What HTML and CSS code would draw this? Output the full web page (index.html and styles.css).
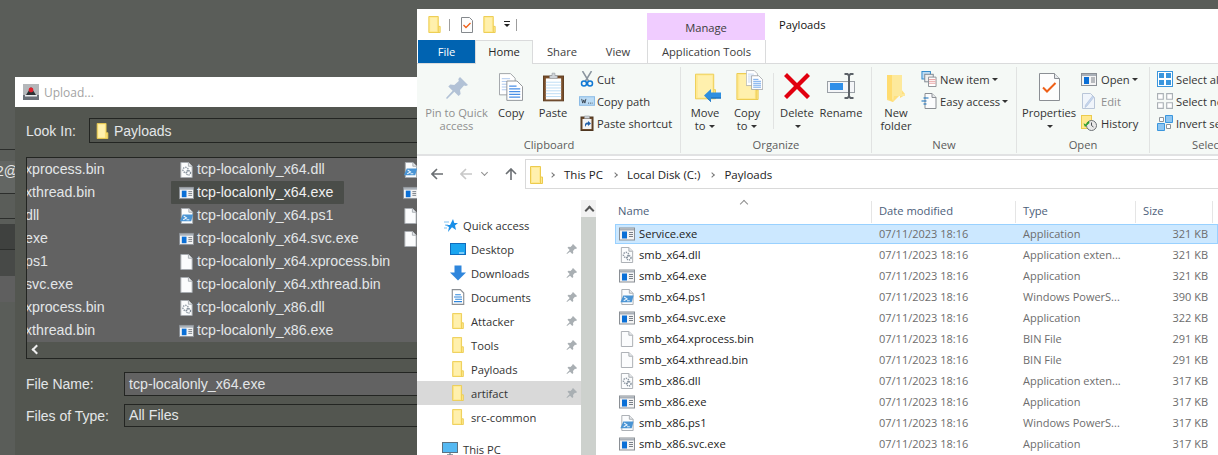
FILE: index.html
```html
<!DOCTYPE html>
<html lang="en">
<head>
<meta charset="utf-8">
<title>Payloads</title>
<link rel="stylesheet" href="styles.css">
</head>
<body>
<svg class="defs" width="0" height="0" aria-hidden="true">
  <defs>
    <symbol id="folder" viewBox="0 0 13 18"><path d="M.5.5h10v10.500h2v6.500H.5z" fill="#ffe98f" stroke="#eccb4e"/><path d="M10.500 11v6.500" stroke="#eccb4e"/><path d="M2 2h7v14H2z" fill="#fff0ad"/></symbol>
    <symbol id="exe" viewBox="0 0 16 13"><rect x=".5" y=".5" width="15" height="12" fill="#f4f4f4" stroke="#8a8f95"/><rect x="1" y="1" width="14" height="2" fill="#a9b0b8"/><rect x="3" y="4" width="5" height="7" fill="#0a6fd6"/><path d="M10 5h4M10 7h4M10 9h4" stroke="#7a8088"/></symbol>
    <symbol id="blank" viewBox="0 0 13 17"><path d="M.5.5h8l4 4v12H.5z" fill="#fbfcfd" stroke="#a6abb0"/><path d="M8.500.5v4h4" fill="#e6e9ec" stroke="#a6abb0"/></symbol>
    <symbol id="dll" viewBox="0 0 13 17"><path d="M.5.5h8l4 4v12H.5z" fill="#fbfcfd" stroke="#a6abb0"/><path d="M8.500.5v4h4" fill="#e6e9ec" stroke="#a6abb0"/><circle cx="5.500" cy="8.500" r="2.800" fill="none" stroke="#8e98a3" stroke-width="1.600" stroke-dasharray="1.500 1"/><circle cx="8.500" cy="11.500" r="2.300" fill="none" stroke="#7f8b97" stroke-width="1.400" stroke-dasharray="1.200 .8"/></symbol>
    <symbol id="ps1" viewBox="0 0 14 17"><path d="M1.500.5h8l4 4v12h-12z" fill="#fbfcfd" stroke="#a6abb0"/><path d="M9.500.5v4h4" fill="#e6e9ec" stroke="#a6abb0"/><path d="M3 7h11l-2 7H0z" fill="#4a94d4"/><path d="M4 8.500l3 2-3.500 2" fill="none" stroke="#e9f4fd" stroke-width="1.200"/><path d="M7 12.500h3" stroke="#e9f4fd"/></symbol>
    <symbol id="pin" viewBox="0 0 12 12"><path d="M7 1l4 4-1 1-1-.200-2 2.200.300 2-1 1-2.300-2.300L1 11l-.500-.500L3.700 7 1.500 4.700l1-1 2 .300L6.700 1.800 6.500 1z" fill="#a9afb3"/></symbol>
    <symbol id="bigpin" viewBox="0 0 24 24"><path d="M15 1l8 8-2 1-2-.500-4 4.500.600 4-2 2-4.300-4.300L2 23l-1-1 6.600-7.300L3.300 10.400l2-2 4 .600L13.800 5 13.300 3z" fill="#b2c2d6"/></symbol>
    <symbol id="copy" viewBox="0 0 26 30"><path d="M.5.500h12l5 5v18H.500z" fill="#fff" stroke="#9a9ea3"/><path d="M3 6h9M3 9h12M3 12h12M3 15h12M3 18h12" stroke="#a9c6ee"/><path d="M8.500 8.500h11l6 6v15h-17z" fill="#fff" stroke="#8b8f94"/><path d="M11 14h8M11 17h12M11 20h12M11 23h12M11 26h12" stroke="#4a8fe6" stroke-width="1.200"/></symbol>
    <symbol id="paste" viewBox="0 0 22 30"><rect x=".5" y="3.500" width="21" height="26" fill="#7a4f2a" stroke="#5f3d20"/><rect x="3" y="6" width="16" height="22" fill="#fff"/><path d="M3 10h16M3 13h16M3 16h16M3 19h16M3 22h16M3 25h16" stroke="#bcdcf5"/><path d="M7 3h2.500V.5h3V3H15v3H7z" fill="#cfd4d9" stroke="#8d9399" stroke-width=".6"/></symbol>
    <symbol id="cut" viewBox="0 0 13 16"><path d="M2 0l6 10M11 0L5 10" stroke="#8a949e" stroke-width="1.500" fill="none"/><circle cx="3.500" cy="12.500" r="2.500" fill="none" stroke="#0f78d4" stroke-width="1.500"/><circle cx="9.500" cy="12.500" r="2.500" fill="none" stroke="#0f78d4" stroke-width="1.500"/></symbol>
    <symbol id="copypath" viewBox="0 0 15 9"><rect x=".5" y=".5" width="14" height="8" fill="#bcdcf5" stroke="#8cbce6"/><path d="M2.500 2.500l1 4 1-3 1 3 1-4M8.500 6.500h1M10.500 6.500h1M12.500 6.500h.5" stroke="#2f3b47" fill="none" stroke-width=".8"/></symbol>
    <symbol id="pasteshort" viewBox="0 0 13 16"><rect x=".5" y="2" width="12" height="13.500" fill="#6d4a2a" stroke="#4f3720"/><rect x="2" y="4" width="9" height="10" fill="#f4f4f4"/><path d="M4 1h5v2.500H4z" fill="#cfd4d9" stroke="#8d9399" stroke-width=".6"/><path d="M4.500 12V9.500c0-1 1-2 2-2h1V6l3 2.500-3 2.500V9.500h-1c-.600 0-1 .500-1 1.100z" fill="#1f5ea8"/></symbol>
    <symbol id="bigfolder" viewBox="0 0 23 28"><path d="M.5.5h20v17h2v10H.500z" fill="#ffe98f" stroke="#eccb4e"/><path d="M20.500 17.500v10" stroke="#eccb4e"/><path d="M3 2h16v24H3z" fill="#fff0ad"/></symbol>
    <symbol id="arrowblue" viewBox="0 0 17 13"><path d="M7 0v3.500h10v6H7V13L0 6.500z" fill="#2f8fe0"/><path d="M7 9.500h10v-1H7zM7 13L.5 7 7 12z" fill="#1668b4"/></symbol>
    <symbol id="deletex" viewBox="0 0 26 26"><path d="M3 0l10 10L23 0l3 3-10 10 10 10-3 3-10-10L3 26l-3-3 10-10L0 3z" fill="#e1000f"/></symbol>
    <symbol id="rename" viewBox="0 0 28 26"><rect x=".5" y="8.500" width="27" height="11" fill="#f4f6f8" stroke="#9aa0a6"/><rect x="3" y="10" width="13" height="7" fill="#2f8fe8"/><path d="M19 1h3l1.500 1.500L25 1h3M23.500 2v21M19 25h3l1.500-1.500L25 25h3" transform="translate(-1.500)" fill="none" stroke="#5c6268" stroke-width="2"/></symbol>
    <symbol id="newfolder" viewBox="0 0 18 27"><path d="M0 0h13v23l5-3V20H14v-6 0l4 5v1h-5L6 27 0 25z" fill="#ffe07f"/><path d="M5 0h10v19h3v2H7l-1 6-1-3V0z" fill="#fde99c"/><path d="M0 0h5v24l1 3-6-4z" fill="#ffdc70"/></symbol>
    <symbol id="newitem" viewBox="0 0 16 17"><rect x=".5" y=".5" width="9" height="8" fill="#bcdcf5" stroke="#2d87c9"/><rect x="3.500" y="3.500" width="9" height="8" fill="#f0f0f0" stroke="#7d868f"/><path d="M7.500 6.500h8v10h-8z" fill="#fff" stroke="#8b8f94"/><path d="M8 9h7M8 11h7M8 13h7" stroke="#e7a0a0"/></symbol>
    <symbol id="easy" viewBox="0 0 15 16"><path d="M3.500.5h7l4 4v11h-11z" fill="#fbfcfd" stroke="#8b8f94"/><path d="M10.500.5v4h4" fill="#e6e9ec" stroke="#8b8f94"/><path d="M2 5h5M0 8h5M2 11h3" stroke="#0f6cbd" stroke-width="1.200"/></symbol>
    <symbol id="props" viewBox="0 0 21 28"><path d="M.5.500h15l5 5v22H.500z" fill="#fdfdfd" stroke="#8b8f94"/><path d="M15.500.5v5h5" fill="#e6e9ec" stroke="#8b8f94"/><path d="M4 14.500l4 4 8.500-8.500" fill="none" stroke="#ee5f17" stroke-width="2"/></symbol>
    <symbol id="smallprops" viewBox="0 0 12 16"><path d="M.5.500h8l3 3v12H.500z" fill="#fdfdfd" stroke="#85898d"/><path d="M2.500 8l2.500 2.500L9.500 6" fill="none" stroke="#ee5f17" stroke-width="1.300"/></symbol>
    <symbol id="edit" viewBox="0 0 14 16"><path d="M.5.5h8l4 4v11H.500z" fill="#f0f5fb" stroke="#b9c6d8"/><path d="M12 4L5 13l-2 1.500.500-2.500L10.500 3z" fill="#c5d6ee" stroke="#aebfd8" stroke-width=".6"/></symbol>
    <symbol id="history" viewBox="0 0 16 16"><rect x=".5" y=".5" width="10" height="13" fill="#ffe98f" stroke="#eccb4e"/><circle cx="10.500" cy="10.500" r="5" fill="#e8e8e8" stroke="#6b7075"/><path d="M10.500 7.500v3l2 1.500" fill="none" stroke="#50555a"/><path d="M5 10a4.500 4.500 0 0 1 3-4l.500 2L4 12 2.500 8.500l2 .500" fill="#2fa02f"/></symbol>
    <symbol id="selall" viewBox="0 0 16 16"><rect x=".5" y=".5" width="15" height="15" fill="#fff" stroke="#3a96dd"/><path d="M2 2h5v5H2zM9 2h5v5H9zM2 9h5v5H2zM9 9h5v5H9z" fill="#3a96dd"/></symbol>
    <symbol id="selnone" viewBox="0 0 14 14"><path d="M.5.500h5v5h-5zM8.500.500h5v5h-5zM.5 8.500h5v5h-5zM8.500 8.500h5v5h-5z" fill="#fff" stroke="#aab0b5"/></symbol>
    <symbol id="invert" viewBox="0 0 16 16"><path d="M.5 8.500h7v7h-7z" fill="#8ec6f2" stroke="#3a96dd"/><path d="M8.500.5h7v7h-7z" fill="#8ec6f2" stroke="#3a96dd"/><path d="M2.500 2.500h4v4h-4zM9.500 9.500h4v4h-4z" fill="#fff" stroke="#8d9399"/></symbol>
    <symbol id="star" viewBox="0 0 14 13"><path d="M9 0l1.300 4H14l-3 2.500L12 11 8 8.300 4 13l1-5L1 6h5z" fill="#1a8fe8"/><path d="M0 3h5M1 6h3M0 9h3" stroke="#7fc1f2"/></symbol>
    <symbol id="desktop" viewBox="0 0 16 12"><rect width="16" height="12" fill="#0f6cbd"/><rect x="1" y="1" width="14" height="10" fill="#1aa5f0"/><path d="M9 10h5" stroke="#e6f4ff"/></symbol>
    <symbol id="downloads" viewBox="0 0 16 15"><path d="M4.500 0h7v7H16l-8 8-8-8h4.500z" fill="#2f86dc"/></symbol>
    <symbol id="documents" viewBox="0 0 11 14"><path d="M.5.500h7l3 3v10h-10z" fill="#fff" stroke="#8b8f94"/><path d="M3 5h5M2 7h7M3 9h6M2 11h7" stroke="#2f86dc"/></symbol>
    <symbol id="pc" viewBox="0 0 16 14"><rect x=".5" y=".5" width="15" height="10" fill="#55b9f3" stroke="#5d7282"/><path d="M5 13h6M8 11v2" stroke="#7a8894" stroke-width="1.400"/></symbol>
    <symbol id="upload" viewBox="0 0 16 16"><rect width="16" height="16" fill="#b4b7ba"/><path d="M0 11h16v5H0z" fill="#6a7078"/><path d="M3 11l5-8 5 8z" fill="#2e3236"/><circle cx="8" cy="6" r="2.400" fill="#e2202c"/><path d="M2 11h12v1.500H2z" fill="#eceef0"/></symbol>
    <symbol id="back" viewBox="0 0 12 12"><path d="M6 1L1 6l5 5M1 6h11" fill="none" stroke="currentColor" stroke-width="1.600"/></symbol>
    <symbol id="up" viewBox="0 0 12 12"><path d="M1 6l5-5 5 5M6 1v11" fill="none" stroke="currentColor" stroke-width="1.600"/></symbol>
  </defs>
</svg>

<div class="backdrop">
  <div class="back-line back-a">2@</div>
  <div class="back-line back-b"></div>
  <div class="back-gap"></div>
  <div class="back-row back-dark"></div>
  <div class="back-row back-mid"></div>
  <div class="back-row back-light"></div>
</div>

<section class="dialog">
  <header class="dialog-title">
    <svg class="ic16"><use href="#upload"/></svg>
    <span>Upload...</span>
  </header>
  <div class="dialog-body">
    <div class="look">
      <label class="look-label">Look In:</label>
      <div class="look-box"><svg class="ic-folder"><use href="#folder"/></svg><span>Payloads</span></div>
    </div>
    <div class="list">
      <div class="list-cols">
        <ul class="col col-clip">
          <li>xprocess.bin</li><li>xthread.bin</li><li>dll</li><li>exe</li><li>ps1</li><li>svc.exe</li><li>xprocess.bin</li><li>xthread.bin</li>
        </ul>
        <ul class="col col-main">
          <li><svg class="fi"><use href="#dll"/></svg>tcp-localonly_x64.dll</li>
          <li class="sel"><svg class="fi"><use href="#exe"/></svg>tcp-localonly_x64.exe</li>
          <li><svg class="fi"><use href="#ps1"/></svg>tcp-localonly_x64.ps1</li>
          <li><svg class="fi"><use href="#exe"/></svg>tcp-localonly_x64.svc.exe</li>
          <li><svg class="fi"><use href="#blank"/></svg>tcp-localonly_x64.xprocess.bin</li>
          <li><svg class="fi"><use href="#blank"/></svg>tcp-localonly_x64.xthread.bin</li>
          <li><svg class="fi"><use href="#dll"/></svg>tcp-localonly_x86.dll</li>
          <li><svg class="fi"><use href="#exe"/></svg>tcp-localonly_x86.exe</li>
        </ul>
        <ul class="col col-edge">
          <li><svg class="fi"><use href="#ps1"/></svg></li>
          <li><svg class="fi"><use href="#exe"/></svg></li>
          <li><svg class="fi"><use href="#blank"/></svg></li>
          <li><svg class="fi"><use href="#blank"/></svg></li>
        </ul>
      </div>
      <div class="hscroll"><span class="left-caret"></span></div>
    </div>
    <div class="field">
      <label>File Name:</label>
      <div class="input">tcp-localonly_x64.exe</div>
    </div>
    <div class="field field-type">
      <label>Files of Type:</label>
      <div class="input input-flat">All Files</div>
    </div>
  </div>
</section>

<section class="explorer">
  <div class="titlebar">
    <div class="qat">
      <svg class="q-folder"><use href="#folder"/></svg>
      <i class="q-sep"></i>
      <svg class="q-props"><use href="#smallprops"/></svg>
      <svg class="q-folder q-gap"><use href="#folder"/></svg>
      <span class="q-drop"></span>
      <i class="q-sep q-sep2"></i>
    </div>
    <div class="manage">Manage</div>
    <div class="wintitle">Payloads</div>
  </div>
  <nav class="tabs">
    <div class="tab tab-file">File</div>
    <div class="tab tab-home">Home</div>
    <div class="tab tab-share">Share</div>
    <div class="tab tab-view">View</div>
    <div class="tab tab-app">Application Tools</div>
  </nav>

  <div class="ribbon">
    <div class="group g-clip">
      <div class="g-items">
        <div class="big b-pin muted"><svg class="ic-pinbig"><use href="#bigpin"/></svg><span>Pin to Quick<br>access</span></div>
        <div class="big b-copy"><svg class="ic-copy"><use href="#copy"/></svg><span>Copy</span></div>
        <div class="big b-paste"><svg class="ic-paste"><use href="#paste"/></svg><span>Paste</span></div>
        <div class="small-col sc-clip">
          <div class="small"><svg class="si"><use href="#cut"/></svg>Cut</div>
          <div class="small"><svg class="si"><use href="#copypath"/></svg>Copy path</div>
          <div class="small"><svg class="si"><use href="#pasteshort"/></svg>Paste shortcut</div>
        </div>
      </div>
      <div class="g-label">Clipboard</div>
    </div>
    <div class="group g-org">
      <div class="g-items">
        <div class="big b-move">
          <div class="icon-stack"><svg class="ic-bigfolder"><use href="#bigfolder"/></svg><svg class="ov-arrow"><use href="#arrowblue"/></svg></div>
          <span>Move<br>to <b class="car"></b></span>
        </div>
        <div class="big b-copyto">
          <div class="icon-stack"><svg class="ic-bigfolder"><use href="#bigfolder"/></svg><svg class="ov-doc"><use href="#copy"/></svg></div>
          <span>Copy<br>to <b class="car"></b></span>
        </div>
        <i class="inner-sep"></i>
        <div class="big b-del"><svg class="ic-del"><use href="#deletex"/></svg><span>Delete<br><b class="car"></b></span></div>
        <div class="big b-ren"><svg class="ic-ren"><use href="#rename"/></svg><span>Rename</span></div>
      </div>
      <div class="g-label">Organize</div>
    </div>
    <div class="group g-new">
      <div class="g-items">
        <div class="big b-newf"><svg class="ic-newf"><use href="#newfolder"/></svg><span>New<br>folder</span></div>
        <div class="small-col sc-new">
          <div class="small"><svg class="si"><use href="#newitem"/></svg>New item <b class="car car-s"></b></div>
          <div class="small"><svg class="si"><use href="#easy"/></svg>Easy access <b class="car car-s"></b></div>
        </div>
      </div>
      <div class="g-label">New</div>
    </div>
    <div class="group g-open">
      <div class="g-items">
        <div class="big b-prop"><svg class="ic-prop"><use href="#props"/></svg><span>Properties<br><b class="car"></b></span></div>
        <div class="small-col sc-open">
          <div class="small"><svg class="si si-wide"><use href="#exe"/></svg>Open <b class="car car-s"></b></div>
          <div class="small muted"><svg class="si"><use href="#edit"/></svg>Edit</div>
          <div class="small"><svg class="si"><use href="#history"/></svg>History</div>
        </div>
      </div>
      <div class="g-label">Open</div>
    </div>
    <div class="group g-sel">
      <div class="g-items">
        <div class="small-col sc-sel">
          <div class="small"><svg class="si"><use href="#selall"/></svg>Select all</div>
          <div class="small"><svg class="si"><use href="#selnone"/></svg>Select none</div>
          <div class="small"><svg class="si"><use href="#invert"/></svg>Invert selection</div>
        </div>
      </div>
      <div class="g-label g-label-sel">Select</div>
    </div>
  </div>

  <div class="addr">
    <svg class="nv nv-back"><use href="#back"/></svg>
    <svg class="nv nv-fwd"><use href="#back"/></svg>
    <span class="nv-chev"></span>
    <svg class="nv nv-up"><use href="#up"/></svg>
    <div class="addr-box">
      <svg class="ic-folder-addr"><use href="#folder"/></svg>
      <span class="crumb-sep"></span><span>This PC</span>
      <span class="crumb-sep"></span><span>Local Disk (C:)</span>
      <span class="crumb-sep"></span><span>Payloads</span>
    </div>
  </div>

  <div class="main">
    <aside class="nav">
      <div class="nav-list">
        <div class="nav-row nr-quick"><svg class="ni-star"><use href="#star"/></svg>Quick access</div>
        <div class="nav-row"><svg class="ni"><use href="#desktop"/></svg><span class="nt">Desktop</span><svg class="npin"><use href="#pin"/></svg></div>
        <div class="nav-row"><svg class="ni"><use href="#downloads"/></svg><span class="nt">Downloads</span><svg class="npin"><use href="#pin"/></svg></div>
        <div class="nav-row"><svg class="ni"><use href="#documents"/></svg><span class="nt">Documents</span><svg class="npin"><use href="#pin"/></svg></div>
        <div class="nav-row"><svg class="ni"><use href="#folder"/></svg><span class="nt">Attacker</span><svg class="npin"><use href="#pin"/></svg></div>
        <div class="nav-row"><svg class="ni"><use href="#folder"/></svg><span class="nt">Tools</span><svg class="npin"><use href="#pin"/></svg></div>
        <div class="nav-row"><svg class="ni"><use href="#folder"/></svg><span class="nt">Payloads</span><svg class="npin"><use href="#pin"/></svg></div>
        <div class="nav-row nav-on"><svg class="ni"><use href="#folder"/></svg><span class="nt">artifact</span><svg class="npin"><use href="#pin"/></svg></div>
        <div class="nav-row"><svg class="ni"><use href="#folder"/></svg><span class="nt">src-common</span></div>
        <div class="nav-row nr-pc"><svg class="ni-pc"><use href="#pc"/></svg>This PC</div>
      </div>
      <div class="vscroll"><div class="vs-btn"></div><div class="vs-thumb"></div></div>
    </aside>
    <div class="files">
      <div class="sort-caret"></div>
      <div class="thead">
        <div class="th">Name</div>
        <div class="th">Date modified</div>
        <div class="th">Type</div>
        <div class="th">Size</div>
      </div>
      <div class="tr tr-sel"><div class="td-name"><svg class="fi"><use href="#exe"/></svg>Service.exe</div><div>07/11/2023 18:16</div><div>Application</div><div class="td-size">321 KB</div></div>
      <div class="tr"><div class="td-name"><svg class="fi"><use href="#dll"/></svg>smb_x64.dll</div><div>07/11/2023 18:16</div><div>Application exten...</div><div class="td-size">321 KB</div></div>
      <div class="tr"><div class="td-name"><svg class="fi"><use href="#exe"/></svg>smb_x64.exe</div><div>07/11/2023 18:16</div><div>Application</div><div class="td-size">321 KB</div></div>
      <div class="tr"><div class="td-name"><svg class="fi"><use href="#ps1"/></svg>smb_x64.ps1</div><div>07/11/2023 18:16</div><div>Windows PowerS...</div><div class="td-size">390 KB</div></div>
      <div class="tr"><div class="td-name"><svg class="fi"><use href="#exe"/></svg>smb_x64.svc.exe</div><div>07/11/2023 18:16</div><div>Application</div><div class="td-size">322 KB</div></div>
      <div class="tr"><div class="td-name"><svg class="fi"><use href="#blank"/></svg>smb_x64.xprocess.bin</div><div>07/11/2023 18:16</div><div>BIN File</div><div class="td-size">291 KB</div></div>
      <div class="tr"><div class="td-name"><svg class="fi"><use href="#blank"/></svg>smb_x64.xthread.bin</div><div>07/11/2023 18:16</div><div>BIN File</div><div class="td-size">291 KB</div></div>
      <div class="tr"><div class="td-name"><svg class="fi"><use href="#dll"/></svg>smb_x86.dll</div><div>07/11/2023 18:16</div><div>Application exten...</div><div class="td-size">317 KB</div></div>
      <div class="tr"><div class="td-name"><svg class="fi"><use href="#exe"/></svg>smb_x86.exe</div><div>07/11/2023 18:16</div><div>Application</div><div class="td-size">317 KB</div></div>
      <div class="tr"><div class="td-name"><svg class="fi"><use href="#ps1"/></svg>smb_x86.ps1</div><div>07/11/2023 18:16</div><div>Windows PowerS...</div><div class="td-size">317 KB</div></div>
      <div class="tr"><div class="td-name"><svg class="fi"><use href="#exe"/></svg>smb_x86.svc.exe</div><div>07/11/2023 18:16</div><div>Application</div><div class="td-size">317 KB</div></div>
    </div>
  </div>
</section>
</body>
</html>
```
FILE: styles.css
```css
* { box-sizing: border-box; }
html, body { margin: 0; height: 100%; }
body {
  width: 1218px; height: 455px; overflow: hidden; position: relative;
  background: #5a5d59; font-family: "Open Sans", "Noto Sans", sans-serif; font-size: 11.2px; color: #1e1e1e;
}
.defs { position: absolute; }
ul { list-style: none; margin: 0; padding: 0; }
svg { display: block; flex: none; }

/* window behind the dialog */
.backdrop { position: absolute; left: 0; top: 149px; width: 15px; font-family: "Liberation Sans", sans-serif; font-size: 14px; color: #e6e6e6; overflow: hidden; }
.back-line { border-top: 1px solid #2c2e2c; overflow: hidden; }
.back-a { height: 44px; padding-top: 13px; line-height: 16px; white-space: nowrap; text-indent: -4px; background: linear-gradient(#5a5d59 11px, #636663 11px); }
.back-b { height: 25px; background: #5a5d59; }
.back-gap { height: 6px; border-top: 1px solid #2c2e2c; }
.back-row { height: 26px; }
.back-dark { background: #3f413f; border-bottom: 1px solid #2c2e2c; }
.back-mid { background: #474947; }
.back-light { background: #5f5f5f; }

/* dialog */
.dialog { position: absolute; left: 15px; top: 77px; width: 402px; height: 378px; overflow: hidden; background: #535650; font-family: "Liberation Sans", sans-serif; font-size: 14px; color: #e3e6e8; }
.dialog-title { height: 30px; background: #fff; display: flex; align-items: center; gap: 5px; padding-left: 8px; font-family: "Open Sans", sans-serif; font-size: 12px; color: #a3a3a3; }
.ic16 { width: 16px; height: 16px; }
.dialog-body { padding: 11px 0 0 11px; }
.look { display: flex; align-items: center; height: 25px; }
.look-label { width: 63px; }
.look-box { flex: 1; height: 25px; border: 1px solid #232522; border-right: 0; display: flex; align-items: center; gap: 5px; padding-left: 6px; }
.ic-folder { width: 13px; height: 16px; }
.list { margin-top: 14px; height: 202px; border: 1px solid #232522; border-right: 0; background: #626262; display: flex; flex-direction: column; overflow: hidden; font-size: 14.2px; }
.list-cols { display: flex; height: 184px; }
.col li { height: 23px; line-height: 23px; white-space: nowrap; display: flex; align-items: center; }
.col-clip { width: 146px; margin-left: -2px; flex: none; }
.col-main { width: 232px; flex: none; }
.col-main li { width: max-content; padding-left: 8px; padding-right: 10px; gap: 3px; }
.col-main .sel { background: #4a4d49; width: 173px; border-radius: 1px; color: #f0f0f0; }
.col-main .fi { width: 15px; }
.col-edge .fi { width: 15px; }
.fi { width: 16px; height: 16px; }
.hscroll { flex: 1; background: #535650; padding: 4px 0 0 6px; }
.left-caret { display: block; width: 7px; height: 7px; border-left: 2px solid #eee; border-bottom: 2px solid #eee; transform: rotate(45deg); }
.field { display: flex; align-items: center; margin-top: 13px; height: 24px; }
.field label { width: 98px; flex: none; }
.input { flex: 1; height: 24px; background: #626262; border: 1px solid #232522; border-right: 0; padding-left: 4px; line-height: 22px; white-space: nowrap; font-size: 14.2px; }
.field-type { margin-top: 8px; height: 23px; }
.input-flat { background: #535650; height: 23px; line-height: 21px; }

/* explorer */
.explorer { position: absolute; left: 417px; top: 9px; width: 801px; height: 446px; background: #fff; overflow: hidden; display: flex; flex-direction: column; }
.titlebar { height: 31px; display: flex; flex: none; position: relative; }
.qat { width: 230px; display: flex; align-items: center; padding-left: 11px; }
.q-folder { width: 13px; height: 17px; }
.q-sep { width: 1px; height: 12px; background: #9d9d9d; margin-left: 8px; }
.q-props { width: 12px; height: 16px; margin-left: 11px; }
.q-gap { margin-left: 10px; }
.q-drop { width: 6px; height: 7px; margin-left: 8px; border-top: 1px solid #222; position: relative; }
.q-drop::after { content: ""; position: absolute; left: 0; top: 2px; border: 3px solid transparent; border-top: 3px solid #222; border-bottom: 0; }
.q-sep2 { margin-left: 6px; }
.manage { width: 118px; margin-top: 4px; height: 27px; background: #f0ccff; text-align: center; line-height: 29px; color: #3c3c3c; }
.wintitle { margin-left: 14px; line-height: 31px; color: #111; height: 31px; }
.tabs { height: 24px; display: flex; flex: none; color: #3c3c3c; border-bottom: 1px solid #dadbdc; position: relative; }
.tab { text-align: center; line-height: 24px; }
.tab-file { width: 57px; margin-left: 1px; background: #0063b1; color: #fff; height: 23px; }
.tab-home { width: 58px; height: 24px; background: #f5f9f6; border: 1px solid #dadbdc; border-bottom: 0; color: #262626; line-height: 22px; }
.tab-share { width: 58px; }
.tab-view { width: 54px; }
.tab-app { width: 119px; margin-left: 2px; border: 1px solid #dadbdc; border-width: 0 1px; background: #fff; height: 23px; }

.ribbon { height: 92px; flex: none; background: #f5f9f6; border-bottom: 2px solid #e1e2e3; display: flex; padding: 3px 0 0 1px; }
.group { border-right: 1px solid #e1e3e2; height: 86px; display: flex; flex-direction: column; flex: none; position: relative; }
.g-items { display: flex; height: 70px; }
.g-label { text-align: center; color: #5c5c5c; line-height: 16px; margin-top: 3px; }
.g-clip { width: 263px; }
.g-org { width: 191px; }
.g-new { width: 145px; }
.g-open { width: 133px; }
.g-sel { width: 100px; border-right: 0; }
.g-label-sel { text-align: left; padding-left: 42px; }
.big { display: flex; flex-direction: column; align-items: center; text-align: center; line-height: 13px; flex: none; position: relative; color: #333; }
.big > span { position: absolute; top: 39px; left: -12px; right: -12px; }
.muted { color: #8f8f8f; }
.b-pin { width: 67px; margin-left: 5px; }
.ic-pinbig { width: 24px; height: 24px; margin-top: 9px; }
.b-copy { width: 42px; }
.ic-copy { width: 24px; height: 28px; margin-top: 6px; }
.b-paste { width: 42px; }
.ic-paste { width: 21px; height: 30px; margin-top: 5px; }
.small-col { display: flex; flex-direction: column; padding-top: 1px; }
.small { height: 22px; display: flex; align-items: center; white-space: nowrap; color: #333; }
.small.muted { color: #8f8f8f; }
.si { width: 16px; height: 16px; margin-right: 3px; }
.si-wide { height: 13px; }
.sc-clip { margin-left: 5px; }
.sc-clip .si { margin-right: 2px; }
.b-move { width: 40px; margin-left: 4px; }
.b-copyto { width: 44px; }
.icon-stack { position: relative; width: 34px; height: 34px; }
.ic-bigfolder { width: 21px; height: 27px; position: absolute; left: 7px; top: 6px; }
.ov-arrow { position: absolute; left: 16px; top: 22px; width: 17px; height: 13px; }
.ov-doc { position: absolute; left: 16px; top: 3px; width: 17px; height: 20px; }
.b-copyto .ic-bigfolder { left: 6px; width: 23px; }
.inner-sep { width: 1px; height: 56px; background: #e1e3e2; margin: 6px 3px 0 4px; flex: none; }
.b-del { width: 40px; }
.ic-del { width: 26px; height: 26px; margin-top: 6px; }
.b-ren { width: 48px; }
.ic-ren { width: 28px; height: 26px; margin-top: 6px; }
.b-newf { width: 48px; }
.ic-newf { width: 18px; height: 27px; margin-top: 8px; }
.sc-new { margin-left: 1px; }
.b-prop { width: 64px; }
.ic-prop { width: 21px; height: 28px; margin-top: 6px; }
.sc-open .si { margin-right: 4px; }
.sc-sel { padding-left: 7px; }
.car { display: inline-block; width: 0; height: 0; border: 3px solid transparent; border-top: 3px solid #333; border-bottom: 0; vertical-align: 2px; margin-left: 1px; }
.car-s { margin-left: 2px; }

.addr { height: 36px; flex: none; display: flex; align-items: center; position: relative; color: #222; font-size: 11.5px; }
.nv { width: 12px; height: 12px; color: #6b6f73; }
.nv-back { margin-left: 14px; }
.nv-fwd { margin-left: 17px; color: #c8c8c8; }
.nv-chev { width: 5px; height: 5px; margin-left: 10px; margin-top: -3px; border-right: 1px solid #8f8f8f; border-bottom: 1px solid #8f8f8f; transform: rotate(45deg); }
.nv-up { margin-left: 18px; }
.addr-box { height: 30px; margin-left: 8px; flex: 1; border: 1px solid #d9d9d9; border-right: 0; display: flex; align-items: center; padding: 1px 0 0 4px; }
.ic-folder-addr { width: 13px; height: 18px; margin-right: -3px; }
.crumb-sep { width: 4px; height: 4px; border-top: 1.500px solid #777; border-right: 1.500px solid #777; transform: rotate(45deg); margin: 0 10px; }

.main { flex: 1; display: flex; min-height: 0; }
.nav { width: 183px; flex: none; display: flex; position: relative; }
.nav-list { width: 164px; padding-top: 21px; flex: none; }
.nav-row { height: 24px; display: flex; align-items: center; padding-left: 33px; position: relative; color: #333; }
.nav-row .ni { width: 16px; height: 16px; }
.nav-row .nt { margin-left: 5px; }
.nr-quick { padding-left: 27px; }
.ni-star { width: 14px; height: 13px; margin-right: 5px; }
.npin { width: 12px; height: 12px; position: absolute; right: 3px; top: 6px; }
.nav-on { background: #d9d9d9; }
.nr-pc { margin-top: 8px; padding-left: 25px; }
.ni-pc { width: 16px; height: 14px; margin-right: 5px; }
.vscroll { width: 15px; display: flex; flex-direction: column; padding-top: 8px; }
.vs-btn { height: 17px; background: #f2f2f2; position: relative; }
.vs-btn::after { content: ""; position: absolute; left: 5px; top: 7px; width: 5px; height: 5px; border-top: 2px solid #555; border-left: 2px solid #555; transform: rotate(45deg); }
.vs-thumb { flex: 1; background: #cdd1cd; }
.files { flex: 1; padding: 9px 0 0 15px; position: relative; min-width: 0; }
.sort-caret { position: absolute; left: 141px; top: 9px; width: 6px; height: 6px; border-top: 1px solid #8f8f8f; border-left: 1px solid #8f8f8f; transform: rotate(45deg); }
.thead, .tr { display: grid; grid-template-columns: 257px 144px 120px 77px; }
.thead { height: 23px; color: #4c607a; }
.th { line-height: 19px; padding-left: 7px; border-right: 1px solid #e5e5e5; margin-bottom: 1px; }
.th:first-child { padding-left: 3px; }
.tr { height: 21px; line-height: 20px; color: #6d6d6d; white-space: nowrap; font-size: 11px; }
.tr > div { padding-left: 7px; overflow: hidden; }
.tr > .td-name { display: flex; align-items: center; padding: 0 0 1px 4px; color: #222; gap: 4px; font-size: 11.2px; }
.tr > .td-size { padding: 0 5px 0 0; text-align: right; }
.tr-sel { height: 20px; margin-bottom: 1px; background: #cce8ff; box-shadow: inset 0 0 0 1px #99d1ff; }
```
